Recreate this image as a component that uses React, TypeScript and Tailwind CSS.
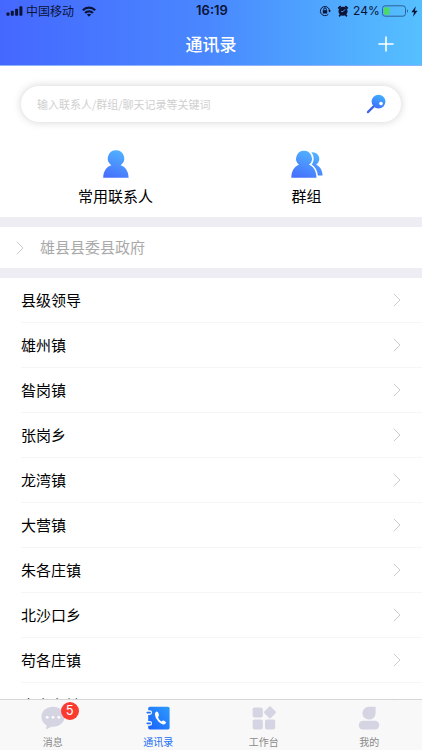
import { useState } from "react";

const towns = [
  "县级领导",
  "雄州镇",
  "昝岗镇",
  "张岗乡",
  "龙湾镇",
  "大营镇",
  "朱各庄镇",
  "北沙口乡",
  "苟各庄镇",
  "米家务镇",
];

function Chevron() {
  return (
    <svg className="text-[#cccccc]" width="8" height="14" viewBox="0 0 8 14" fill="none" stroke="currentColor" strokeWidth="1">
      <path d="M0.8 0.8 7 7 0.8 13.2" />
    </svg>
  );
}

function StatusBar() {
  return (
    <div className="grid h-[22px] grid-cols-[1fr_auto_1fr] items-center pr-1 pl-[6px] text-xs text-[#0b1437]">
      <div className="flex items-center">
        <svg width="17" height="10" viewBox="0 0 17 10" fill="currentColor">
          <rect x="0.5" y="6.5" width="3" height="3.2" rx="0.8" />
          <rect x="4.8" y="4.8" width="3" height="4.9" rx="0.8" />
          <rect x="9.1" y="2.7" width="3" height="7" rx="0.8" />
          <rect x="13.4" y="0.3" width="3" height="9.4" rx="0.8" />
        </svg>
        <span className="ml-[3px]">中国移动</span>
        <svg className="ml-2" width="14" height="11" viewBox="0 0 14 11" fill="none" stroke="currentColor" strokeWidth="2.3">
          <path d="M0.8 4.3C4.3 0.8 9.7 0.8 13.2 4.3" />
          <path d="M3.1 7C5.2 4.9 8.8 4.9 10.9 7" />
          <path d="M7 10.8 4.8 8.6C6.1 7.5 7.9 7.5 9.2 8.6Z" fill="currentColor" stroke="none" />
        </svg>
      </div>
      <span className="font-['Inter',sans-serif] text-[13px] font-semibold">16:19</span>
      <div className="flex items-center justify-end">
        <svg width="12" height="12" viewBox="0 0 12 12" fill="none" stroke="currentColor" strokeWidth="1">
          <path d="M9.3 9.3A4.6 4.6 0 1 1 10.6 6" />
          <path d="M9 5.4 10.6 7.4 12 5.4Z" fill="currentColor" stroke="none" />
          <rect x="3.8" y="5.2" width="4.4" height="3.3" fill="currentColor" stroke="none" />
          <path d="M4.7 5.3V4.2a1.3 1.3 0 0 1 2.6 0v1.1" />
        </svg>
        <svg className="ml-[6px]" width="12" height="12" viewBox="0 0 12 12">
          <circle cx="6" cy="6.2" r="4.5" fill="currentColor" />
          <path d="M1.8 3 3.2 1.7M10.2 3 8.8 1.7M3 10.2 2.6 10.8M9 10.2l0.4 0.6" stroke="currentColor" strokeWidth="1.8" strokeLinecap="round" />
          <path d="M8 4.4 6 6.6H4.2" fill="none" stroke="#4e9bff" strokeWidth="1" />
        </svg>
        <span className="ml-1 w-[26px] text-center font-['Inter',sans-serif]">24%</span>
        <svg className="ml-[3px]" width="27" height="12" viewBox="0 0 27 12">
          <rect x="0.5" y="0.8" width="23" height="10.4" rx="2.6" fill="none" stroke="#2c6297" strokeWidth="1" />
          <path d="M25 4.2C26.4 4.8 26.4 7.2 25 7.8Z" fill="#2c6297" />
          <path d="M3.4 2.2H7.4V9.8H3.4A1.6 1.6 0 0 1 1.9 8.2V3.8A1.6 1.6 0 0 1 3.4 2.2Z" fill="#4cd964" />
        </svg>
        <svg className="ml-[2px]" width="7" height="11" viewBox="0 0 7 11" fill="currentColor">
          <path d="M4.8 0.3 0.4 6.2H3L2 10.7 6.6 4.7H3.9Z" />
        </svg>
      </div>
    </div>
  );
}

function SearchIcon() {
  return (
    <svg width="20" height="20" viewBox="0 0 20 20">
      <defs>
        <linearGradient id="lens" x1="0.3" y1="1" x2="0.7" y2="0">
          <stop offset="0" stopColor="#3d6dfd" />
          <stop offset="1" stopColor="#41b2fd" />
        </linearGradient>
      </defs>
      <path d="M1.9 18.1 7.4 12.6" stroke="#4163e6" strokeWidth="2.2" strokeLinecap="round" />
      <circle cx="12.5" cy="7.6" r="6.9" fill="url(#lens)" />
      <circle cx="15" cy="9.6" r="1.8" fill="#fff" />
    </svg>
  );
}

function PersonGradient({ id }: { id: string }) {
  return (
    <defs>
      <linearGradient id={id} gradientUnits="userSpaceOnUse" x1="8" y1="28" x2="19" y2="0">
        <stop offset="0" stopColor="#4770fd" />
        <stop offset="1" stopColor="#50b5ff" />
      </linearGradient>
    </defs>
  );
}

function ContactIcon() {
  return (
    <svg width="26" height="28" viewBox="0 0 26 28" fill="url(#contact)">
      <PersonGradient id="contact" />
      <path d="M13 0.2A8.2 8.2 0 0 0 8.4 15.2C3.6 16.6 0.4 20.8 0.2 27.8H25.6C25.4 20.8 22.3 16.6 17.6 15.2A8.2 8.2 0 0 0 13 0.2Z" />
    </svg>
  );
}

function GroupIcon() {
  return (
    <svg width="32" height="28" viewBox="0 0 32 28" fill="url(#group)">
      <PersonGradient id="group" />
      <path d="M13 0.8A7.9 7.9 0 0 0 8 14.8C3.4 16.4 0.5 20.8 0.3 27.8H25.5C25.3 20.8 22.4 16.4 18 14.8A7.9 7.9 0 0 0 13 0.8Z" />
      <path d="M20.4 2.2C25 1.8 28.3 4.8 28.3 8.8C28.3 11.4 27 13.4 25.2 14.7C29.2 16.4 31.3 20 31.6 25.4H26.9C26.2 20.4 24.3 17 20.8 14.6C23.3 11 23.4 6 20.4 2.2Z" />
    </svg>
  );
}

function MessageIcon() {
  return (
    <svg width="24" height="24" viewBox="0 0 24 24" fill="currentColor">
      <path d="M12 0.8C5.6 0.8 0.4 5 0.4 10.8C0.4 14.8 2.5 17.7 5.6 19.4L5 23.4 10.4 20.7C18 21.4 23.6 16.8 23.6 10.8C23.6 5 18.4 0.8 12 0.8Z" />
      <g fill="#fff">
        <circle cx="6.2" cy="11.3" r="1.4" />
        <circle cx="12" cy="11.3" r="1.4" />
        <circle cx="17.8" cy="11.3" r="1.4" />
      </g>
    </svg>
  );
}

function BookIcon() {
  return (
    <svg width="24" height="24" viewBox="0 0 24 24">
      <defs>
        <linearGradient id="book" x1="0" y1="1" x2="1" y2="0">
          <stop offset="0" stopColor="#1a62fb" />
          <stop offset="1" stopColor="#2c9bfd" />
        </linearGradient>
      </defs>
      <rect x="2.2" y="0.8" width="21.4" height="22.6" rx="1.6" fill="url(#book)" />
      <path d="M0 6.6H3.8M0 17.4H3.8" stroke="#f8f8f8" strokeWidth="4.6" strokeLinecap="round" />
      <path d="M1.2 6.6H4.2M1.2 17.4H4.2" stroke="#2474fc" strokeWidth="1.6" strokeLinecap="round" />
      <path
        d="M10.5 5.6C9 6.4 8.6 8.2 9.4 10.6C10.8 14.6 14 17.8 17.2 18.4C18.8 18.7 19.8 17.8 20 16.6C20 15.8 17.6 14.2 16.8 14.6L15.6 15.6C14 14.8 12.4 12.8 12 11L12.9 9.7C13.3 8.8 12 5.2 10.5 5.6Z"
        fill="#fff"
      />
    </svg>
  );
}

function WorkIcon() {
  return (
    <svg width="24" height="24" viewBox="0 0 24 24" fill="currentColor">
      <rect x="0.6" y="1.6" width="10.2" height="10" rx="2" />
      <rect x="0.6" y="13.6" width="10.2" height="10" rx="2" />
      <rect x="13" y="13.6" width="10.2" height="10" rx="2" />
      <rect x="13.4" y="1.7" width="9.2" height="9.2" rx="1.6" transform="rotate(45 18 6.3)" />
    </svg>
  );
}

function MineIcon() {
  return (
    <svg width="24" height="24" viewBox="0 0 24 24" fill="currentColor">
      <path d="M11.8 0.8H18.6V7.2A6.6 6.4 0 1 1 11.8 0.8Z" />
      <rect x="1.8" y="14.8" width="20.4" height="8.8" rx="4.2" />
    </svg>
  );
}

const tabs = [
  { label: "消息", icon: MessageIcon, badge: 5 },
  { label: "通讯录", icon: BookIcon },
  { label: "工作台", icon: WorkIcon },
  { label: "我的", icon: MineIcon },
];

function App() {
  const [active, setActive] = useState("通讯录");
  const [keyword, setKeyword] = useState("");

  return (
    <div className="flex h-screen flex-col bg-white font-['Noto_Sans_CJK_SC',sans-serif] text-black">
      {/* Header */}
      <header className="shrink-0 border-b border-[#8db4fb] bg-linear-to-r from-[#4567ff] via-[#4a88ff] to-[#56c0ff]">
        <StatusBar />
        <div className="grid h-[43px] grid-cols-[1fr_auto_1fr] items-center px-7 text-white">
          <h1 className="col-start-2 text-[17px] leading-5 font-medium">通讯录</h1>
          <button className="justify-self-end" aria-label="添加">
            <svg width="16" height="16" viewBox="0 0 16 16" stroke="currentColor" strokeWidth="1.6">
              <path d="M8 0.4V15.6M0.4 8H15.6" />
            </svg>
          </button>
        </div>
      </header>

      <main className="min-h-0 flex-1 overflow-y-auto [scrollbar-width:none]">
        {/* Search */}
        <form className="mx-[21px] mt-5 flex h-9 items-center rounded-full bg-white pr-[15px] pl-4 shadow-[0_0_9px_rgba(0,0,0,0.18)]">
          <input
            className="min-w-0 flex-1 text-[11px] outline-none placeholder:text-[#cfcfcf]"
            placeholder="输入联系人/群组/聊天记录等关键词"
            aria-label="搜索"
            value={keyword}
            onChange={(e) => setKeyword(e.target.value)}
          />
          <button type="button" aria-label="查找">
            <SearchIcon />
          </button>
        </form>

        {/* Shortcuts */}
        <div className="flex h-[95px] px-5 pt-7 text-[15px] leading-6">
          <button className="flex flex-1 flex-col items-center gap-[6px]">
            <ContactIcon />
            <span>常用联系人</span>
          </button>
          <button className="flex flex-1 flex-col items-center gap-[6px]">
            <GroupIcon />
            <span>群组</span>
          </button>
        </div>

        {/* Current organisation */}
        <button className="flex h-[61px] w-full items-center gap-4 border-y-[10px] border-[#eeedf3] px-4 text-[15px] text-[#a9a9a9]">
          <Chevron />
          <span>雄县县委县政府</span>
        </button>

        {/* Departments */}
        <ul className="pl-[21px] text-[15px]">
          {towns.map((town) => (
            <li key={town} className="border-b border-[#f6f6f6]">
              <button className="flex h-11 w-full items-center justify-between pr-[21px]">
                <span>{town}</span>
                <Chevron />
              </button>
            </li>
          ))}
        </ul>
      </main>

      {/* Tab bar */}
      <nav className="flex h-[51px] shrink-0 border-t border-[#d6d6d8] bg-[#f8f8f8] pt-[6px]">
        {tabs.map(({ label, icon: Icon, badge }) => (
          <button
            key={label}
            className={`flex flex-1 flex-col items-center gap-1 ${active === label ? "text-[#1b6ff5]" : "text-[#8a8a8a]"}`}
            onClick={() => setActive(label)}
          >
            <span className="relative text-[#d5d4e2]">
              <Icon />
              {badge && (
                <span className="absolute -top-1 -right-[14px] flex h-[18px] w-[18px] items-center justify-center rounded-full bg-[#fb3b30] font-['Inter',sans-serif] text-[13px] text-white">
                  {badge}
                </span>
              )}
            </span>
            <span className="text-[10px] leading-4">{label}</span>
          </button>
        ))}
      </nav>
    </div>
  );
}

export default App;
